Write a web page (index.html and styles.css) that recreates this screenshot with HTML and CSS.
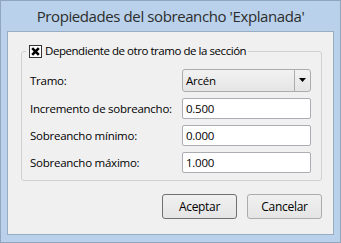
FILE: index.html
```html
<!doctype html>
<html>

<head>
    <link rel="stylesheet" href="styles.css">
</head>

<body>
    <div class="window">
        <div class="title">Propiedades del sobreancho 'Explanada'</div>
        <div class="client">
            <fieldset class="group">
                <legend class="check">
                    <span class="box">
                        <svg width="11" height="11" viewBox="0 0 11 11">
                            <path d="M2.2 2.2 L8.8 8.8 M8.8 2.2 L2.2 8.8" stroke="#000" stroke-width="2.6" />
                        </svg>
                    </span>
                    Dependiente de otro tramo de la sección
                </legend>
                <div class="form">
                    <label>Tramo:</label>
                    <div class="combo">
                        <span class="combo-text">Arcén</span>
                        <span class="combo-arrow">
                            <svg width="7" height="4" viewBox="0 0 7 4">
                                <path d="M0 0 H7 L3.5 4 Z" fill="#000" />
                            </svg>
                        </span>
                    </div>
                    <label>Incremento de sobreancho:</label>
                    <div class="field">0.500</div>
                    <label>Sobreancho mínimo:</label>
                    <div class="field">0.000</div>
                    <label>Sobreancho máximo:</label>
                    <div class="field">1.000</div>
                </div>
            </fieldset>
            <div class="buttons">
                <button class="btn default">Aceptar</button>
                <button class="btn">Cancelar</button>
            </div>
        </div>
    </div>
</body>

</html>
```

FILE: styles.css
```css
* {
    box-sizing: border-box;
    margin: 0;
    padding: 0;
}

body {
    width: 341px;
    height: 243px;
    background: #fff;
    font-family: 'Open Sans', 'Noto Sans', sans-serif;
    color: #000;
}

.window {
    width: 341px;
    height: 243px;
    background: #b9d1ea;
    border: 1px solid #8fa6bd;
    padding: 0 6px 7px 6px;
    display: flex;
    flex-direction: column;
}

.title {
    height: 30px;
    line-height: 30px;
    text-align: center;
    font-size: 15px;
    color: #2d2d2d;
    letter-spacing: -0.4px;
}

.client {
    flex: 1;
    background: #f0f0f0;
    border: 1px solid #98acc2;
    padding: 0 11px 0 13px;
}

.group {
    border: 1px solid #d0d0d0;
    border-radius: 3px;
    margin-top: 11px;
    padding: 10px 9px 7px 8px;
}

.check {
    display: flex;
    align-items: center;
    gap: 3px;
    margin-left: -4px;
    padding: 0 2px 0 3px;
    font-size: 11.5px;
    letter-spacing: -0.45px;
    line-height: 16px;
}

.box {
    width: 13px;
    height: 13px;
    border: 1px solid #333;
    background: #fff;
    display: flex;
    align-items: center;
    justify-content: center;
}

.form {
    display: grid;
    grid-template-columns: 152px 129px;
    grid-template-rows: 23px 21px 21px 21px;
    row-gap: 6px;
    align-items: center;
    font-size: 11.5px;
    letter-spacing: -0.25px;
}

.form label {
    white-space: nowrap;
}

.combo {
    height: 23px;
    margin-bottom: 1px;
    border: 1px solid #acacac;
    border-radius: 3px;
    background: linear-gradient(#f2f2f2, #e5e5e5);
    display: flex;
}

.combo-text {
    flex: 1;
    padding-left: 3px;
    line-height: 21px;
}

.combo-arrow {
    width: 16px;
    border-left: 1px solid #acacac;
    display: flex;
    align-items: center;
    justify-content: center;
}

.field {
    height: 21px;
    border: 1px solid #abadb3;
    border-radius: 2px;
    background: #fff;
    padding-left: 3px;
    line-height: 19px;
}

.buttons {
    display: flex;
    justify-content: flex-end;
    gap: 10px;
    margin-top: 13px;
}

.btn {
    width: 75px;
    height: 25px;
    border: 1px solid #acacac;
    border-radius: 3px;
    background: linear-gradient(#f0f0f0, #e5e5e5);
    font-family: 'Open Sans', 'Noto Sans', sans-serif;
    font-size: 12px;
    letter-spacing: -0.3px;
    color: #000;
}

.btn.default {
    border: 1px solid #707070;
}
```
